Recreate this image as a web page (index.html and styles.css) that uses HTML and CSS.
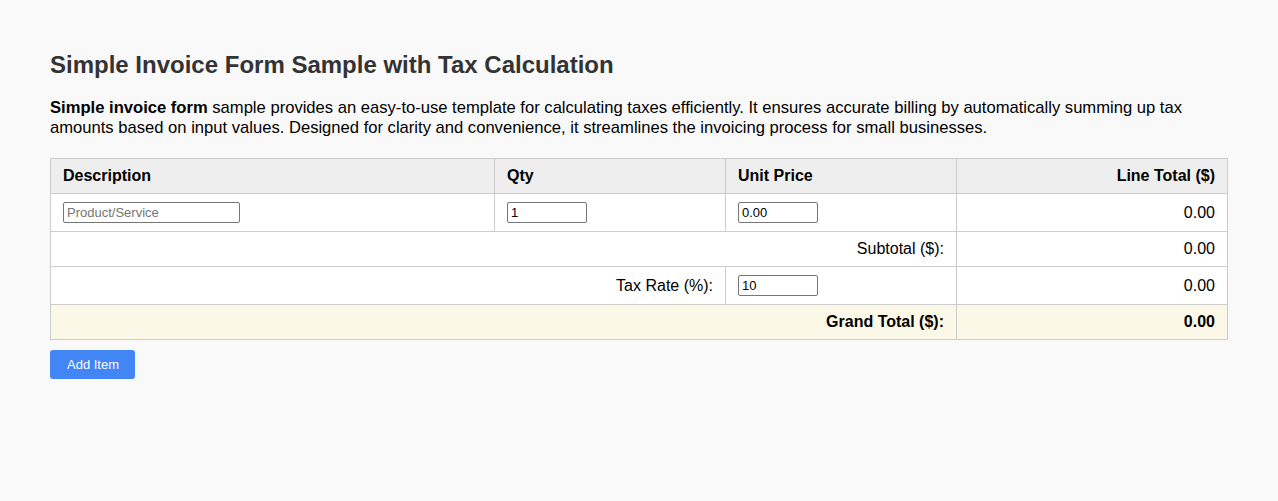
FILE: index.html
```html
<!DOCTYPE html>
<html>
<head>
    <title>Simple Invoice Form Sample with Tax Calculation</title>
    <link rel="stylesheet" href="styles.css">
</head>
<body>
    <h2>Simple Invoice Form Sample with Tax Calculation</h2>
    <p class="intro"><strong>Simple invoice form</strong> sample provides an easy-to-use template for calculating taxes efficiently. It ensures accurate billing by automatically summing up tax amounts based on input values. Designed for clarity and convenience, it streamlines the invoicing process for small businesses.</p>

    <table class="invoice">
        <thead>
            <tr>
                <th class="col-desc">Description</th>
                <th class="col-qty">Qty</th>
                <th class="col-price">Unit Price</th>
                <th class="col-total num">Line Total ($)</th>
            </tr>
        </thead>
        <tbody id="items">
            <tr>
                <td><input type="text" class="desc" placeholder="Product/Service"></td>
                <td><input type="text" class="qty" value="1"></td>
                <td><input type="text" class="price" value="0.00"></td>
                <td class="num line-total">0.00</td>
            </tr>
        </tbody>
        <tfoot>
            <tr>
                <td colspan="3" class="num">Subtotal ($):</td>
                <td class="num" id="subtotal">0.00</td>
            </tr>
            <tr>
                <td colspan="2" class="num">Tax Rate (%):</td>
                <td><input type="text" class="price" id="tax-rate" value="10"></td>
                <td class="num" id="tax">0.00</td>
            </tr>
            <tr class="grand">
                <td colspan="3" class="num">Grand Total ($):</td>
                <td class="num" id="grand">0.00</td>
            </tr>
        </tfoot>
    </table>

    <button class="add-button" onclick="addItem()">Add Item</button>

    <script>
        function addItem() {
            const row = document.querySelector('#items tr').cloneNode(true);
            row.querySelectorAll('input').forEach(input => {
                input.value = input.classList.contains('qty') ? '1' : input.classList.contains('price') ? '0.00' : '';
            });
            row.querySelector('.line-total').innerText = '0.00';
            document.getElementById('items').appendChild(row);
        }

        function recalc() {
            let subtotal = 0;
            document.querySelectorAll('#items tr').forEach(row => {
                const qty = parseFloat(row.querySelector('.qty').value) || 0;
                const price = parseFloat(row.querySelector('.price').value) || 0;
                const total = qty * price;
                row.querySelector('.line-total').innerText = total.toFixed(2);
                subtotal += total;
            });
            const rate = parseFloat(document.getElementById('tax-rate').value) || 0;
            const tax = subtotal * rate / 100;
            document.getElementById('subtotal').innerText = subtotal.toFixed(2);
            document.getElementById('tax').innerText = tax.toFixed(2);
            document.getElementById('grand').innerText = (subtotal + tax).toFixed(2);
        }

        document.addEventListener('input', recalc);
    </script>
</body>
</html>
```

FILE: styles.css
```css
body {
    font-family: Arial, "Liberation Sans", sans-serif;
    background-color: #f9f9f9;
    margin: 0;
    padding: 30px 50px;
    color: #000;
}

h2 {
    font-size: 24px;
    color: #333;
    margin: 21px 0 19px 0;
}

.intro {
    font-size: 16.6px;
    line-height: 20px;
    margin: 0 0 20px 0;
}

.invoice {
    width: 100%;
    border-collapse: collapse;
    background-color: #fff;
    font-size: 16px;
}

.invoice th,
.invoice td {
    border: 1px solid #ccc;
    padding: 8px 12px;
    text-align: left;
}

.invoice th {
    background-color: #eee;
    font-weight: bold;
}

.col-desc { width: 419px; }
.col-qty { width: 206px; }
.col-price { width: 206px; }

.invoice .num {
    text-align: right;
}

.grand td {
    background-color: #fcf8e8;
    font-weight: bold;
}

.invoice input {
    font-family: Arial, "Liberation Sans", sans-serif;
    font-size: 13px;
    border: 1px solid #767676;
    border-radius: 2px;
    padding: 2px 3px;
    height: 21px;
    box-sizing: border-box;
    margin: 0;
}

.invoice input.desc { width: 177px; }
.invoice input.qty,
.invoice input.price { width: 80px; }

.add-button {
    margin-top: 10px;
    background-color: #4285f4;
    color: #fff;
    border: none;
    border-radius: 3px;
    font-family: Arial, "Liberation Sans", sans-serif;
    font-size: 13px;
    padding: 0 16px 0 17px;
    height: 29px;
    cursor: pointer;
}

.add-button:hover {
    background-color: #3367d6;
}
```
